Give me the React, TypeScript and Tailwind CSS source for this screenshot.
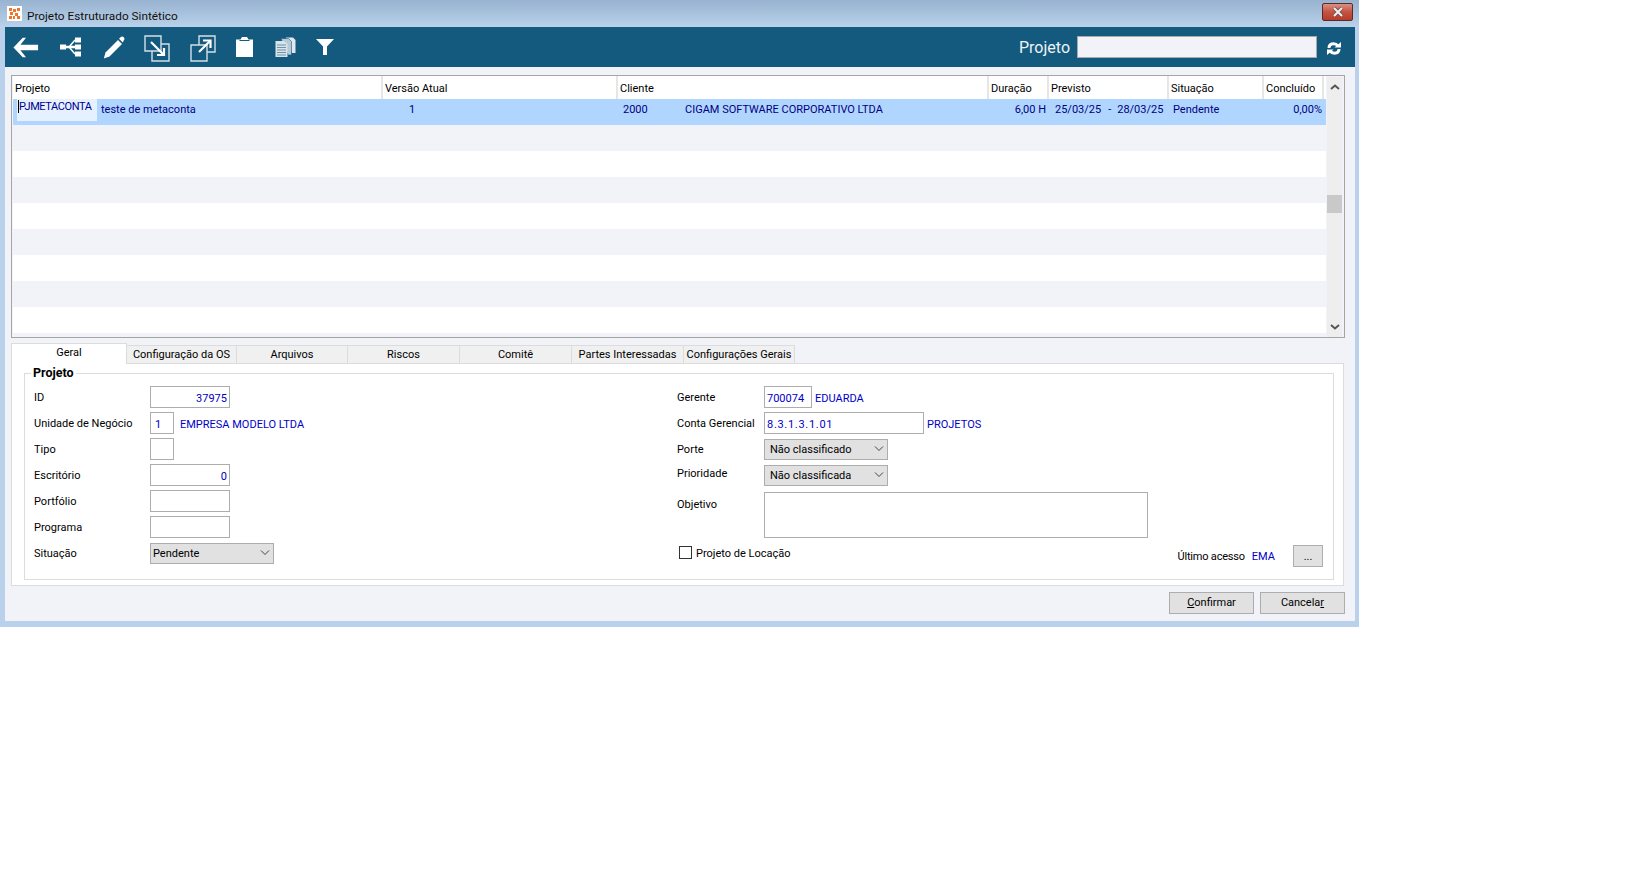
import type { ReactNode } from "react";

const FONT = "font-['Roboto','Liberation_Sans',sans-serif]";

const columns = [
  { label: "Projeto", width: "w-[370px]" },
  { label: "Versão Atual", width: "w-[235px]" },
  { label: "Cliente", width: "w-[371px]" },
  { label: "Duração", width: "w-[60px]" },
  { label: "Previsto", width: "w-[120px]" },
  { label: "Situação", width: "w-[95px]" },
  { label: "Concluído", width: "w-[60px]" },
];

const stripes = [true, false, true, false, true, false, true, false];

function BackIcon() {
  return (
    <svg width="26" height="21" viewBox="0 0 28 22" fill="white">
      <path d="M0.5 11 L10.5 0.5 L14 0.5 L8 8 L27 8 L27 14 L8 14 L14 21.5 L10.5 21.5 Z" />
    </svg>
  );
}

function TreeIcon() {
  return (
    <svg width="21" height="20" viewBox="0 0 21 20" fill="white">
      <rect x="0" y="7.5" width="6" height="5" />
      <rect x="15" y="0.5" width="6" height="5" />
      <rect x="15" y="7.5" width="6" height="5" />
      <rect x="15" y="14.5" width="6" height="5" />
      <path d="M5 9.5 H15 V10.5 H5 Z M9 10 L15 3 M9 10 L15 17" stroke="white" strokeWidth="1.5" fill="none" />
    </svg>
  );
}

function PencilIcon() {
  return (
    <svg width="22" height="23" viewBox="0 0 22 23" fill="white">
      <path d="M0.8 22.4 L2.5 16.5 L15 4 L19 8 L6.5 20.5 Z" />
      <path d="M16 2.8 L17.5 1.3 C18.5 0.3 19.7 0.3 20.7 1.3 C21.7 2.3 21.7 3.5 20.7 4.5 L19.8 6.5 Z" />
    </svg>
  );
}

function ImportIcon() {
  return (
    <svg width="26" height="27" viewBox="0 0 26 27" fill="none" stroke="#d5e0e7" strokeWidth="1.4">
      <path d="M1 1 H17 V16 H1 Z" />
      <path d="M17 9 H25 V26 H8 V16" />
      <path d="M7 7 L19 19" strokeWidth="2.2" stroke="white" />
      <path d="M13 20 H20 V13" strokeWidth="2.2" stroke="white" />
    </svg>
  );
}

function ExportIcon() {
  return (
    <svg width="26" height="27" viewBox="0 0 26 27" fill="none" stroke="#d5e0e7" strokeWidth="1.4">
      <path d="M9 10 V1 H25 V17 H17" />
      <path d="M1 10 H17 V26 H1 Z" />
      <path d="M9 17 L20 6" strokeWidth="2.2" stroke="white" />
      <path d="M13 5.5 H20.5 V13" strokeWidth="2.2" stroke="white" />
    </svg>
  );
}

function ClipboardIcon() {
  return (
    <svg width="17" height="20" viewBox="0 0 17 20" fill="white">
      <path d="M0 2.5 H4.5 L6 0 H11 L12.5 2.5 H17 V20 H0 Z" />
      <path d="M3.5 3.5 H13.5" stroke="#135a7e" strokeWidth="1" />
    </svg>
  );
}

function DocsIcon() {
  return (
    <svg width="21" height="20" viewBox="0 0 21 20" fill="none">
      <path d="M11 0.5 H18 L20.5 3 V16 H17 Z" fill="#dfe8ee" />
      <path d="M6 1.5 H13.5 L16.5 4.5 V18 H13 Z" fill="#b7c9d4" stroke="#135a7e" strokeWidth="0.6" />
      <path d="M0.5 4 H9 L12.5 7 V20 H0.5 Z" fill="#d9e4ea" />
      <path d="M2 8 H11 M2 10.5 H11 M2 13 H11 M2 15.5 H11 M2 18 H11" stroke="#6f93a8" strokeWidth="1" />
    </svg>
  );
}

function FilterIcon() {
  return (
    <svg width="18" height="16" viewBox="0 0 18 16" fill="white">
      <path d="M0 0 H18 L11 7.5 V16 H7 V7.5 Z" />
    </svg>
  );
}

function RefreshIcon() {
  return (
    <svg width="14" height="13" viewBox="0 0 14 13" fill="none" stroke="white" strokeWidth="3">
      <path d="M2 6 C2 3 4 1.8 6.5 1.8 C8.5 1.8 9.8 2.4 10.8 3.8" />
      <path d="M7.5 5.6 H14 V0 Z" fill="white" stroke="none" />
      <path d="M12 7 C12 10 10 11.2 7.5 11.2 C5.5 11.2 4.2 10.6 3.2 9.2" />
      <path d="M6.5 7.4 H0 V13 Z" fill="white" stroke="none" />
    </svg>
  );
}

function AppLogo() {
  return (
    <div className="w-[15px] h-[15px] bg-white flex items-center justify-center">
      <svg width="11" height="11" viewBox="0 0 11 11" fill="#f0742a">
        <path d="M0 0 H3 V3 H0 Z M4 1 H7 V4 H4 Z M8 0 H11 V3 H8 Z M1 4 H4 V7 H1 Z M6 5 H9 V8 H6 Z M0 8 H3 V11 H0 Z M4 8 H6 V11 H4 Z M8 8 H11 V11 H8 Z" />
      </svg>
    </div>
  );
}

function Chevron({ up }: { up?: boolean }) {
  return (
    <svg width="10" height="6" viewBox="0 0 10 6" fill="none" stroke="#555" strokeWidth="2">
      <path d={up ? "M1 5 L5 1.5 L9 5" : "M1 1 L5 4.5 L9 1"} />
    </svg>
  );
}

function Field({ width, align, children }: { width: string; align?: string; children?: ReactNode }) {
  return (
    <div className={`${width} ${align ?? ""} h-[22px] bg-white border border-[#adadad] flex items-end px-[2px] pb-[1px] leading-[14px] text-[#0000c8]`}>
      {children}
    </div>
  );
}

function Select({ value, pad }: { value: string; pad: string }) {
  return (
    <div className={`w-[124px] h-[21px] bg-[#e1e1e1] border border-[#adadad] flex items-center justify-between ${pad} pr-[3px]`}>
      <span className="mt-[2px]">{value}</span>
      <svg width="10" height="6" viewBox="0 0 10 6" fill="none" stroke="#444" strokeWidth="1">
        <path d="M1 0.5 L5 4.5 L9 0.5" />
      </svg>
    </div>
  );
}

function Row({ label, labelWidth, labelPos = "mt-[3px]", children }: { label: string; labelWidth: string; labelPos?: string; children: ReactNode }) {
  return (
    <div className="flex items-center h-[22px]">
      <span className={`${labelWidth} ${labelPos}`}>{label}</span>
      {children}
    </div>
  );
}

export default function App() {
  return (
    <div className={`min-h-screen bg-white text-[11px] text-black ${FONT}`}>
      <div className="w-[1359px] h-[627px] flex flex-col bg-[#b9d1ea]">
        {/* Title bar */}
        <div className="h-[27px] shrink-0 flex items-center pl-[7px] pr-[6px] bg-gradient-to-b from-[#98b3d0] to-[#b9d1ea]">
          <AppLogo />
          <span className="ml-[5px] mt-[6px] text-[11.8px] text-[#111]">Projeto Estruturado Sintético</span>
          <div className="ml-auto mb-[3px] w-[31px] h-[18px] rounded-[2px] border border-[#5a2a2a] bg-gradient-to-b from-[#d99082] via-[#c4533f] to-[#b83b2c] flex items-center justify-center">
            <svg width="14" height="10" viewBox="0 0 14 10">
              <path d="M3 1 L11 9 M11 1 L3 9" stroke="#6b4a4a" strokeWidth="3.8" />
              <path d="M3 1 L11 9 M11 1 L3 9" stroke="#eeeeee" strokeWidth="2.2" />
            </svg>
          </div>
        </div>

        <div className="ml-[5px] mr-[4px] mb-[6px] flex-1 flex flex-col bg-[#f1f3f9]">
          {/* Toolbar */}
          <div className="h-[40px] shrink-0 bg-[#135a7e] flex items-center pl-[8px] pr-[14px]">
            <BackIcon />
            <div className="ml-[21px]"><TreeIcon /></div>
            <div className="ml-[22px]"><PencilIcon /></div>
            <div className="ml-[19px] mt-[2px]"><ImportIcon /></div>
            <div className="ml-[20px] mt-[2px]"><ExportIcon /></div>
            <div className="ml-[20px]"><ClipboardIcon /></div>
            <div className="ml-[22px]"><DocsIcon /></div>
            <div className="ml-[20px]"><FilterIcon /></div>
            <span className="ml-auto text-[16px] text-[#eef3f7] mt-[2px]">Projeto</span>
            <div className="ml-[7px] w-[240px] h-[22px] bg-[#f1f3f9] border border-[#a9a9a9]" />
            <div className="ml-[10px] mt-[3px]"><RefreshIcon /></div>
          </div>

          {/* Grid */}
          <div className="mt-[8px] ml-[6px] mr-[10px] h-[263px] shrink-0 border border-[#a5a5a5] bg-[#f1f3f9] pl-px flex">
            <div className="w-[1313px] flex flex-col">
              <div className="h-[23px] shrink-0 bg-white flex">
                {columns.map((col) => (
                  <div key={col.label} className={`${col.width} h-full pl-[2px] pt-[4px] border-r-2 border-[#e6e6e6] flex items-center`}>
                    {col.label}
                  </div>
                ))}
              </div>
              <div className="h-[26px] shrink-0 bg-[#b0d6ff] text-[#000080] flex pb-[4px]">
                <div className="ml-[4px] w-[80px] h-[22px] -mb-[4px] bg-[#e5f1ff] pl-[1px] leading-[15px] tracking-[-0.4px] text-[#00008f]">
                  <span className="border-l border-black">PJMETACONTA</span>
                </div>
                <div className="ml-[4px] w-[287px] flex items-center">teste de metaconta</div>
                <div className="w-[235px] flex items-center pl-[21px]">1</div>
                <div className="w-[62px] flex items-center">2000</div>
                <div className="w-[308px] flex items-center">CIGAM SOFTWARE CORPORATIVO LTDA</div>
                <div className="w-[60px] flex items-center justify-end pr-[7px]">6,00 H</div>
                <div className="w-[120px] flex items-center pl-[2px]">
                  <span>25/03/25</span>
                  <span className="ml-[7px]">-</span>
                  <span className="ml-[6px]">28/03/25</span>
                </div>
                <div className="w-[96px] flex items-center">Pendente</div>
                <div className="w-[53px] flex items-center justify-end">0,00%</div>
              </div>
              {stripes.map((on, i) => (
                <div key={i} className={`h-[26px] shrink-0 ${on ? "bg-[#f1f3f9]" : "bg-white"}`} />
              ))}
            </div>
            <div className="ml-px w-[15px] h-[260px] mt-px bg-[#eeeeee] flex flex-col items-center justify-between py-[7px]">
              <Chevron up />
              <div className="w-[15px] h-[18px] mt-[105px] mb-auto bg-[#c9c9c9]" />
              <Chevron />
            </div>
          </div>

          {/* Tabs */}
          <div className="mt-[5px] ml-[6px] flex items-end h-[21px] shrink-0 relative z-10 -mb-px">
            <div className="w-[116px] h-[21px] bg-white border border-b-0 border-[#dcdcdc] flex items-center justify-center pb-[1px]">Geral</div>
            {[
              { label: "Configuração da OS", width: "w-[110px]" },
              { label: "Arquivos", width: "w-[111px]" },
              { label: "Riscos", width: "w-[112px]" },
              { label: "Comitê", width: "w-[112px]" },
              { label: "Partes Interessadas", width: "w-[112px]" },
              { label: "Configurações Gerais", width: "w-[111px]" },
            ].map((tab) => (
              <div key={tab.label} className={`${tab.width} h-[19px] bg-[#f0f0f0] border border-l-0 border-[#dcdcdc] flex items-center justify-center pt-[2px] whitespace-nowrap`}>
                {tab.label}
              </div>
            ))}
          </div>

          {/* Tab panel */}
          <div className="ml-[6px] mr-[11px] h-[223px] shrink-0 bg-white border border-[#dcdcdc] pl-[12px] pr-[9px] pt-[2px]">
            <fieldset className="h-[214px] border border-[#dcdcdc] pl-[9px] pr-[10px] pt-[6px]">
              <legend className="-ml-[3px] px-[2px] text-[12.5px] font-bold leading-[14px]">Projeto</legend>
              <div className="flex">
                <div className="w-[643px] flex flex-col gap-[4px]">
                  <Row label="ID" labelWidth="w-[116px]">
                    <Field width="w-[80px]" align="justify-end">37975</Field>
                  </Row>
                  <Row label="Unidade de Negócio" labelWidth="w-[116px]">
                    <Field width="w-[24px]"><span className="pl-[2px]">1</span></Field>
                    <span className="ml-[6px] mt-[4px] text-[#0000c8]">EMPRESA MODELO LTDA</span>
                  </Row>
                  <Row label="Tipo" labelWidth="w-[116px]">
                    <Field width="w-[24px]" />
                  </Row>
                  <Row label="Escritório" labelWidth="w-[116px]">
                    <Field width="w-[80px]" align="justify-end">0</Field>
                  </Row>
                  <Row label="Portfólio" labelWidth="w-[116px]">
                    <Field width="w-[80px]" />
                  </Row>
                  <Row label="Programa" labelWidth="w-[116px]">
                    <Field width="w-[80px]" />
                  </Row>
                  <Row label="Situação" labelWidth="w-[116px]">
                    <Select value="Pendente" pad="pl-[2px]" />
                  </Row>
                </div>
                <div className="flex-1 flex flex-col gap-[4px]">
                  <Row label="Gerente" labelWidth="w-[87px]">
                    <Field width="w-[48px]"><span>700074</span></Field>
                    <span className="ml-[3px] mt-[4px] text-[#0000c8]">EDUARDA</span>
                  </Row>
                  <Row label="Conta Gerencial" labelWidth="w-[87px]">
                    <Field width="w-[160px]"><span className="tracking-[0.7px]">8.3.1.3.1.01</span></Field>
                    <span className="ml-[3px] mt-[4px] text-[#0000c8]">PROJETOS</span>
                  </Row>
                  <Row label="Porte" labelWidth="w-[87px]">
                    <Select value="Não classificado" pad="pl-[5px]" />
                  </Row>
                  <Row label="Prioridade" labelWidth="w-[87px]" labelPos="-mt-px">
                    <Select value="Não classificada" pad="pl-[5px]" />
                  </Row>
                  <div className="flex mt-[2px]">
                    <span className="w-[87px] pt-[5px]">Objetivo</span>
                    <div className="w-[384px] h-[46px] bg-white border border-[#adadad]" />
                  </div>
                  <div className="flex items-start h-[22px] mt-[3px]">
                    <div className="ml-[2px] mt-px w-[13px] h-[13px] border border-[#333] bg-white" />
                    <span className="ml-[4px] mt-px leading-[15px]">Projeto de Locação</span>
                    <span className="ml-auto mt-[2px] self-center tracking-[-0.2px]">Último acesso</span>
                    <span className="ml-[7px] mt-[2px] self-center text-[#0000c8]">EMA</span>
                    <div className="ml-[18px] w-[30px] h-[22px] bg-[#e1e1e1] border border-[#adadad] flex items-center justify-center pt-[2px]">...</div>
                  </div>
                </div>
              </div>
            </fieldset>
          </div>

          {/* Footer */}
          <div className="mt-[6px] mr-[10px] flex justify-end gap-[6px]">
            <div className="w-[85px] h-[22px] bg-[#e1e1e1] border border-[#adadad] flex items-center justify-center">
              <span><span className="underline">C</span>onfirmar</span>
            </div>
            <div className="w-[85px] h-[22px] bg-[#e1e1e1] border border-[#adadad] flex items-center justify-center">
              <span>Cancela<span className="underline">r</span></span>
            </div>
          </div>
        </div>
      </div>
    </div>
  );
}
